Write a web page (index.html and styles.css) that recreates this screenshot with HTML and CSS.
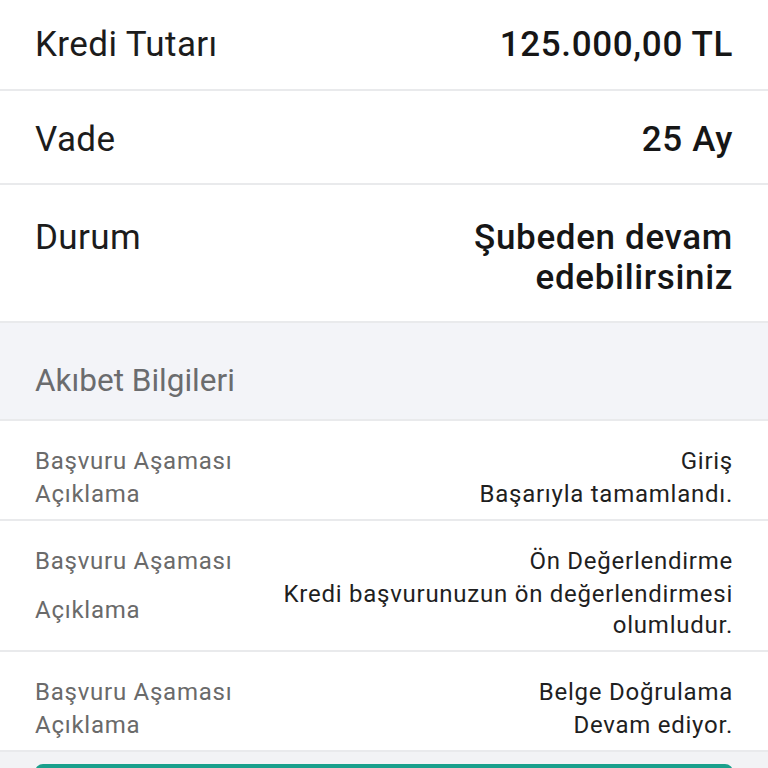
FILE: index.html
```html
<!DOCTYPE html>
<html lang="tr">
<head>
<meta charset="utf-8">
<title>Kredi Başvurusu</title>
<link rel="stylesheet" href="styles.css">
</head>
<body>
<main class="page">
  <section class="summary">
    <div class="summary-row summary-row--amount">
      <span class="summary-label">Kredi Tutarı</span>
      <span class="summary-value">125.000,00 TL</span>
    </div>
    <div class="summary-row summary-row--term">
      <span class="summary-label">Vade</span>
      <span class="summary-value">25 Ay</span>
    </div>
    <div class="summary-row summary-row--status">
      <span class="summary-label">Durum</span>
      <span class="summary-value">Şubeden devam<br>edebilirsiniz</span>
    </div>
  </section>

  <h2 class="section-header">Akıbet Bilgileri</h2>

  <section class="records">
    <div class="record">
      <span class="record-label">Başvuru Aşaması</span>
      <span class="record-value">Giriş</span>
      <span class="record-label">Açıklama</span>
      <span class="record-value">Başarıyla tamamlandı.</span>
    </div>
    <div class="record">
      <span class="record-label">Başvuru Aşaması</span>
      <span class="record-value">Ön Değerlendirme</span>
      <span class="record-label">Açıklama</span>
      <span class="record-value">Kredi başvurunuzun ön değerlendirmesi<br>olumludur.</span>
    </div>
    <div class="record">
      <span class="record-label">Başvuru Aşaması</span>
      <span class="record-value">Belge Doğrulama</span>
      <span class="record-label">Açıklama</span>
      <span class="record-value">Devam ediyor.</span>
    </div>
  </section>

  <footer class="footer">
    <button class="primary-button" type="button" aria-label="Devam"></button>
  </footer>
</main>
</body>
</html>
```

FILE: styles.css
```css
html, body {
  margin: 0;
  padding: 0;
  background: #ffffff;
}

body {
  font-family: Roboto, "Noto Sans", "Liberation Sans", sans-serif;
  color: #1c1c1c;
  width: 768px;
  height: 768px;
  overflow: hidden;
}

.page {
  display: flex;
  flex-direction: column;
  height: 768px;
}

.summary-row {
  display: flex;
  justify-content: space-between;
  align-items: flex-start;
  padding: 0 35px;
  font-size: 35px;
  line-height: 40px;
  border-bottom: 2px solid #e9eaec;
}

.summary-row--amount {
  padding-top: 25px;
  padding-bottom: 24px;
}

.summary-row--term {
  padding-top: 29px;
  padding-bottom: 23px;
}

.summary-row--status {
  padding-top: 33px;
  padding-bottom: 23px;
}

.summary-label {
  font-weight: 400;
  color: #1c1c1c;
  letter-spacing: 0.4px;
}

.summary-value {
  font-weight: 500;
  color: #161616;
  text-align: right;
  letter-spacing: 0.65px;
}

.section-header {
  margin: 0;
  padding: 38px 35px 18px;
  background: #f3f4f8;
  font-size: 31.5px;
  line-height: 40px;
  font-weight: 400;
  color: #6b6c6e;
  border-bottom: 2px solid #e9eaec;
}

.record {
  display: grid;
  grid-template-columns: auto 1fr;
  align-items: center;
  row-gap: 2px;
  padding: 25px 35px 9px;
  font-size: 24px;
  line-height: 31px;
  letter-spacing: 0.75px;
  border-bottom: 2px solid #e9eaec;
}

.record-label {
  color: #6a6a6a;
}

.record-value {
  color: #1f1f1f;
  text-align: right;
}

.footer {
  flex: 1;
  min-height: 0;
  overflow: hidden;
  background: #f2f3f5;
  padding: 12px 35px 0;
}

.primary-button {
  display: block;
  width: 100%;
  height: 56px;
  border: 0;
  border-radius: 8px;
  background: #1aa08c;
}
```
